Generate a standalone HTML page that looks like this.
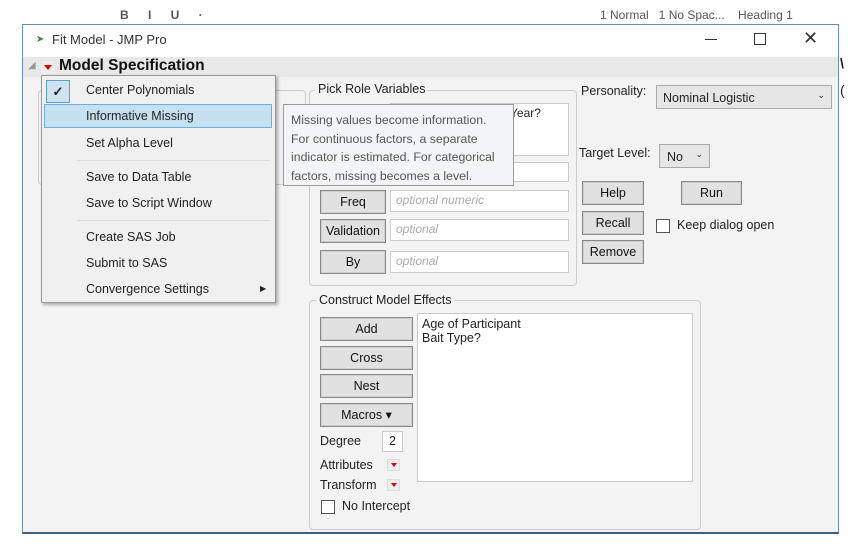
<!DOCTYPE html>
<html><head><meta charset="utf-8"><style>
*{margin:0;padding:0;box-sizing:border-box}
body{width:854px;height:545px;background:#fff;position:relative;overflow:hidden;font-family:"Liberation Sans",sans-serif;font-size:12px;color:#222}
.a{position:absolute}
.btn{position:absolute;background:#e1e1e1;border:1px solid #888;text-align:center;font-size:12.5px;color:#111;line-height:22px;box-shadow:inset 0 0 0 1px #cfcfcf}
.inp{position:absolute;background:#fff;border:1px solid #ccc;font-style:italic;color:#aaa;padding-left:5px;font-size:12px;line-height:19px}
.grp{position:absolute;border:1px solid #ccc;border-radius:4px}
.lg{position:absolute;background:#f3f3f3;padding:0 3px;font-size:12.5px;color:#222}
.mi{position:absolute;left:86px;font-size:12.5px;color:#222}
.cb{position:absolute;width:14px;height:14px;border:1px solid #555;background:#fff}
.rd{position:absolute;width:13px;height:12px;background:#eee;border:1px solid #ddd}
.rd:after{content:"";position:absolute;left:3px;top:3px;border-left:3px solid transparent;border-right:3px solid transparent;border-top:4px solid #d00}
</style></head><body>
<div class="a" style="left:0;top:0;width:854px;height:24px;background:#fff;color:#555;font-size:12px;overflow:hidden">
<span class="a" style="left:120px;top:8px;font-weight:bold;letter-spacing:8px">B I U ·</span>
<span class="a" style="left:600px;top:8px">1 Normal &nbsp; 1 No Spac... &nbsp;&nbsp; Heading 1</span>
</div>
<div class="a" style="left:22px;top:24px;width:817px;height:510px;background:#f3f3f3;border:1px solid #6a8fb5;border-bottom:2px solid #3b5f86"></div>
<div class="a" style="left:23px;top:25px;width:815px;height:32px;background:#fff"></div>
<div class="a" style="left:36px;top:34px;color:#3a8a3a;font-size:10px">➤</div>
<div class="a" style="left:52px;top:32px;font-size:13px;color:#333">Fit Model - JMP Pro</div>
<div class="a" style="left:705px;top:39px;width:12px;height:1px;background:#333"></div>
<div class="a" style="left:754px;top:33px;width:12px;height:12px;border:1px solid #333"></div>
<div class="a" style="left:803px;top:28px;font-size:18px;color:#333">✕</div>
<div class="a" style="left:23px;top:57px;width:815px;height:20px;background:#e8e8e8"></div>
<div class="a" style="left:28px;top:60px;color:#999;font-size:10px">◢</div>
<div class="a" style="left:41px;top:61px;width:14px;height:13px;background:#eee"></div>
<div class="a" style="left:44px;top:65px;border-left:4px solid transparent;border-right:4px solid transparent;border-top:5px solid #d00"></div>
<div class="a" style="left:59px;top:57px;font-size:15.5px;font-weight:bold;color:#111">Model Specification</div>
<div class="a" style="left:840px;top:55px;font-size:14px;font-weight:bold">\</div>
<div class="a" style="left:840px;top:82px;font-size:14px">(</div>

<div class="grp" style="left:38px;top:90px;width:268px;height:95px"></div>

<div class="grp" style="left:309px;top:90px;width:268px;height:196px"></div>
<div class="lg" style="left:315px;top:82px">Pick Role Variables</div>
<div class="a" style="left:390px;top:103px;width:179px;height:53px;background:#fff;border:1px solid #ccc"></div>
<div class="a" style="left:510px;top:106px">Year?</div>
<div class="inp" style="left:390px;top:162px;width:179px;height:20px"></div>
<div class="btn" style="left:320px;top:190px;width:66px;height:24px">Freq</div>
<div class="inp" style="left:390px;top:190px;width:179px;height:22px">optional numeric</div>
<div class="btn" style="left:320px;top:219px;width:66px;height:24px">Validation</div>
<div class="inp" style="left:390px;top:219px;width:179px;height:22px">optional</div>
<div class="btn" style="left:320px;top:250px;width:66px;height:24px">By</div>
<div class="inp" style="left:390px;top:251px;width:179px;height:22px">optional</div>

<div class="a" style="left:581px;top:84px;font-size:12.5px">Personality:</div>
<div class="a" style="left:656px;top:85px;width:176px;height:24px;background:#e6e6e6;border:1px solid #aaa;padding:5px 0 0 6px;font-size:12.5px">Nominal Logistic<span style="position:absolute;right:6px;top:4px;font-size:9px">⌄</span></div>
<div class="a" style="left:579px;top:146px;font-size:12.5px">Target Level:</div>
<div class="a" style="left:659px;top:144px;width:51px;height:24px;background:#e6e6e6;border:1px solid #aaa;padding:5px 0 0 7px;font-size:12.5px">No<span style="position:absolute;right:6px;top:4px;font-size:9px">⌄</span></div>
<div class="btn" style="left:582px;top:181px;width:62px;height:24px">Help</div>
<div class="btn" style="left:681px;top:181px;width:61px;height:24px">Run</div>
<div class="btn" style="left:582px;top:211px;width:62px;height:24px">Recall</div>
<div class="cb" style="left:656px;top:219px"></div>
<div class="a" style="left:677px;top:218px;font-size:12.5px">Keep dialog open</div>
<div class="btn" style="left:582px;top:240px;width:62px;height:24px">Remove</div>

<div class="grp" style="left:309px;top:300px;width:392px;height:230px"></div>
<div class="lg" style="left:316px;top:293px">Construct Model Effects</div>
<div class="btn" style="left:320px;top:317px;width:93px;height:24px">Add</div>
<div class="btn" style="left:320px;top:346px;width:93px;height:24px">Cross</div>
<div class="btn" style="left:320px;top:374px;width:93px;height:24px">Nest</div>
<div class="btn" style="left:320px;top:403px;width:93px;height:24px">Macros ▾</div>
<div class="a" style="left:417px;top:313px;width:276px;height:169px;background:#fff;border:1px solid #ccc;padding:3px 4px;line-height:14px;font-size:12.5px">Age of Participant<br>Bait Type?</div>
<div class="a" style="left:320px;top:434px;font-size:12.5px">Degree</div>
<div class="a" style="left:382px;top:431px;width:21px;height:21px;background:#fff;border:1px solid #ccc;text-align:center;line-height:19px;font-size:12.5px">2</div>
<div class="a" style="left:320px;top:458px;font-size:12.5px">Attributes</div>
<div class="rd" style="left:387px;top:459px"></div>
<div class="a" style="left:320px;top:478px;font-size:12.5px">Transform</div>
<div class="rd" style="left:387px;top:479px"></div>
<div class="cb" style="left:321px;top:500px"></div>
<div class="a" style="left:342px;top:499px;font-size:12.5px">No Intercept</div>

<div class="a" style="left:41px;top:75px;width:235px;height:228px;background:#f0f0f0;border:1px solid #999;box-shadow:2px 2px 3px rgba(0,0,0,.3)"></div>
<div class="a" style="left:46px;top:80px;width:24px;height:23px;background:#cde4f0;border:1px solid #5aa0d0;text-align:center;line-height:21px;font-size:13px;font-weight:bold">✓</div>
<div class="a" style="left:44px;top:104px;width:228px;height:24px;background:#c5e0ee;border:1px solid #6ab0dc"></div>
<div class="a" style="left:77px;top:160px;width:193px;height:1px;background:#ddd"></div>
<div class="a" style="left:77px;top:220px;width:193px;height:1px;background:#ddd"></div>
<div class="mi" style="top:83px">Center Polynomials</div>
<div class="mi" style="top:109px">Informative Missing</div>
<div class="mi" style="top:136px">Set Alpha Level</div>
<div class="mi" style="top:170px">Save to Data Table</div>
<div class="mi" style="top:196px">Save to Script Window</div>
<div class="mi" style="top:230px">Create SAS Job</div>
<div class="mi" style="top:256px">Submit to SAS</div>
<div class="mi" style="top:282px">Convergence Settings</div>
<div class="a" style="left:260px;top:284px;font-size:8px">▶</div>

<div class="a" style="left:283px;top:104px;width:231px;height:82px;background:#f2f4f8;border:1px solid #999;padding:6px 7px;color:#555;font-size:12.3px;line-height:18.5px">Missing values become information.<br>For continuous factors, a separate<br>indicator is estimated. For categorical<br>factors, missing becomes a level.</div>
</body></html>
